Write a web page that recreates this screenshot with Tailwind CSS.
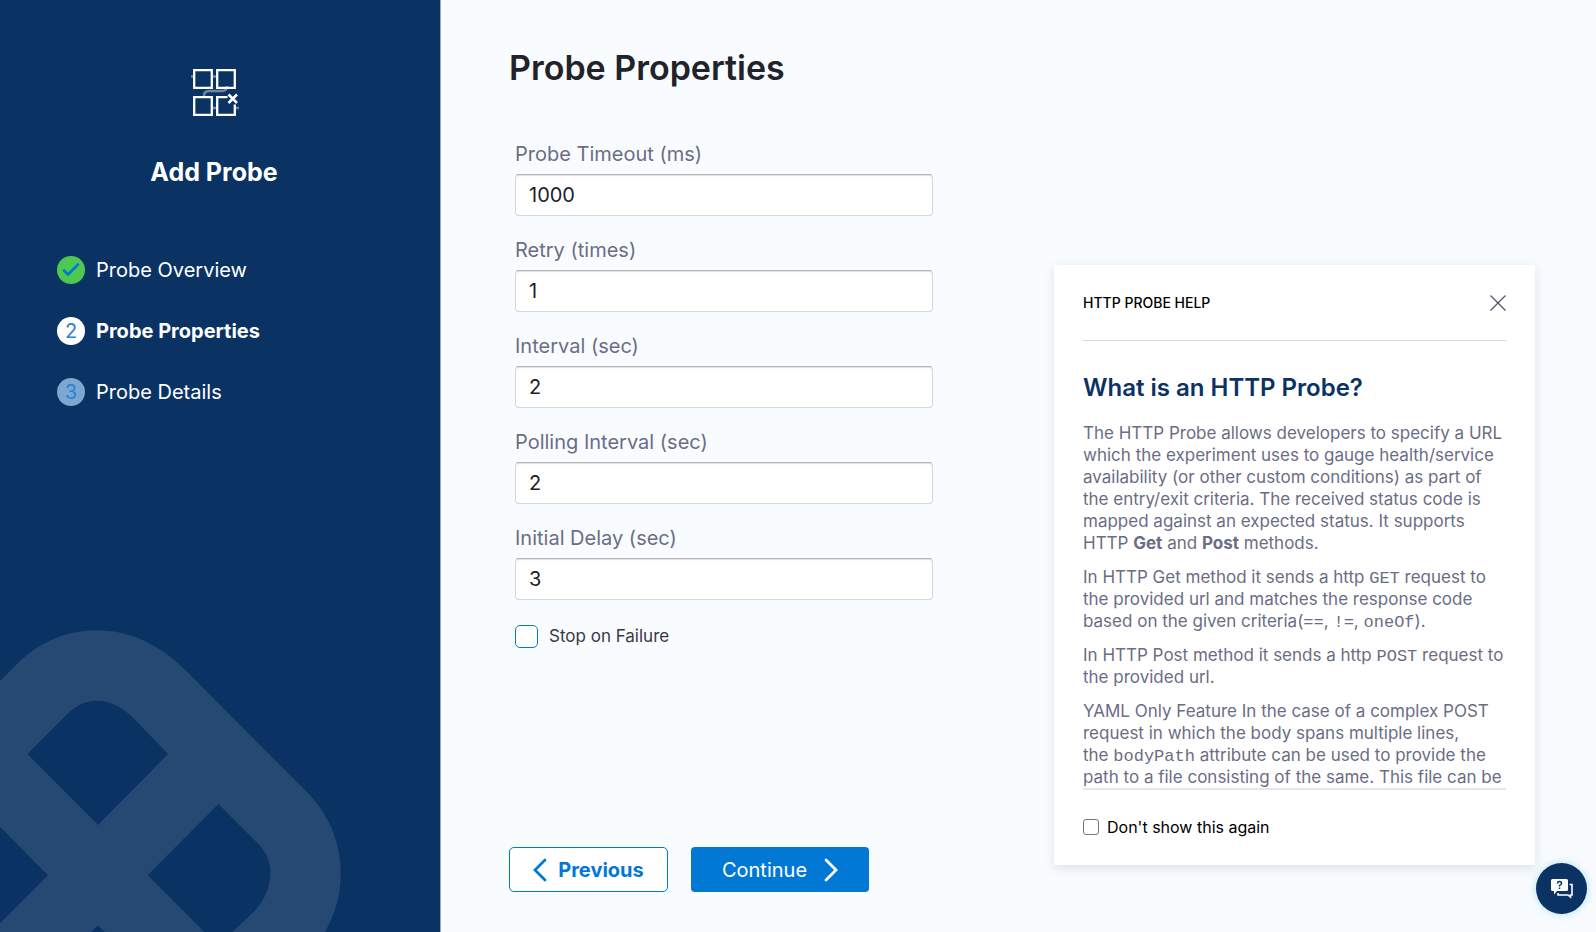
<!DOCTYPE html>
<html lang="en">
<head>
<meta charset="utf-8">
<meta name="viewport" content="width=device-width, initial-scale=1">
<title>Add Probe</title>
<script src="https://cdn.jsdelivr.net/npm/@tailwindcss/browser@4"></script>
</head>
<body class="flex min-h-screen bg-[#f9fcff] font-[Inter,sans-serif] text-[#22222a]">
  <aside class="relative w-[441px] shrink-0 border-r border-[#a9a9a4] bg-[#0a3364] text-white">
    <svg class="absolute bottom-0 left-0 w-[345px]" viewBox="0 0 1035 966" fill="#264973" aria-hidden="true">
      <path fill-rule="evenodd" d="M0 213L45 168C110 103 190 61 290 61C395 61 483 109 550 175L915 540C982 607 1022 690 1022 790C1022 855 1008 905 975 966H697L765 902C795 868 811 830 811 790C811 745 795 722 770 697L655 582L443 796L613 966H314L294 946L274 966H0V940L144 796L0 650ZM82 432L190 324C220 291 250 272 290 272C335 272 370 294 404 328L504 432L294 645Z"/>
    </svg>
    <div class="relative flex w-[428px] flex-col items-center pt-[66px]">
      <svg class="h-[52px] w-[52px]" viewBox="0 0 52 52" fill="none" aria-hidden="true">
        <path d="M3 10.500h3M25 10.500h4M25 42h4M48 42h3M16 31v-1c0-3 2-5 5-5h13c3 0 5-2 5-5" stroke="#6f87a6" stroke-width="2.400"/>
        <path d="M6.200 4.200h17.600v17.600H6.200zM29.200 4.200h17.600v17.600H29.200zM6.200 31.200h17.600v17.600H6.200zM39.500 31.200H29.200v17.600h17.600V38.500" stroke="#fff" stroke-width="2.300"/>
        <path d="M40.500 28.500l8.500 8.500M49 28.500l-8.500 8.500" stroke="#fff" stroke-width="2.600"/>
      </svg>
      <h2 class="mt-9 text-[25px] leading-9 font-bold">Add Probe</h2>
    </div>
    <ol class="relative mt-[66px] flex flex-col gap-[33px] pl-[57px] text-[20px] leading-7">
      <li class="flex items-center gap-[11px]">
        <span class="flex size-7 items-center justify-center rounded-full bg-[#4dc952]">
          <svg class="size-7" viewBox="0 0 28 28" fill="none" stroke="#0278d5" stroke-width="2.600" stroke-linecap="round" stroke-linejoin="round" aria-hidden="true"><path d="M7 14.500l4 4L21 8.500"/></svg>
        </span>Probe Overview</li>
      <li class="flex items-center gap-[11px] font-bold"><span class="flex size-7 items-center justify-center rounded-full bg-white font-normal text-[#2a82d2]">2</span>Probe Properties</li>
      <li class="flex items-center gap-[11px]"><span class="flex size-7 items-center justify-center rounded-full bg-[#7ba7d0] text-[#2a82d2]">3</span>Probe Details</li>
    </ol>
  </aside>

  <main class="flex grow justify-between">
    <form class="ml-[68px] flex w-[424px] flex-col pt-[46px] pb-10">
      <h1 class="text-[34px] leading-11 font-semibold whitespace-nowrap">Probe Properties</h1>
      <div class="mt-[50px] ml-[6px] flex flex-col gap-5 text-[20px] text-[#6b6d85]">
        <div class="flex flex-col gap-[6px]"><label for="timeout" class="leading-7">Probe Timeout (ms)</label>
          <input id="timeout" value="1000" class="h-[42px] rounded border border-[#d6d7dc] border-t-[#b3b4b9] bg-white px-[13px] text-[#1b222b] inset-shadow-[0_1px_1px_rgba(0,0,0,0.12)]"></div>
        <div class="flex flex-col gap-[6px]"><label for="retry" class="leading-7">Retry (times)</label>
          <input id="retry" value="1" class="h-[42px] rounded border border-[#d6d7dc] border-t-[#b3b4b9] bg-white px-[13px] text-[#1b222b] inset-shadow-[0_1px_1px_rgba(0,0,0,0.12)]"></div>
        <div class="flex flex-col gap-[6px]"><label for="interval" class="leading-7">Interval (sec)</label>
          <input id="interval" value="2" class="h-[42px] rounded border border-[#d6d7dc] border-t-[#b3b4b9] bg-white px-[13px] text-[#1b222b] inset-shadow-[0_1px_1px_rgba(0,0,0,0.12)]"></div>
        <div class="flex flex-col gap-[6px]"><label for="polling" class="leading-7">Polling Interval (sec)</label>
          <input id="polling" value="2" class="h-[42px] rounded border border-[#d6d7dc] border-t-[#b3b4b9] bg-white px-[13px] text-[#1b222b] inset-shadow-[0_1px_1px_rgba(0,0,0,0.12)]"></div>
        <div class="flex flex-col gap-[6px]"><label for="delay" class="leading-7">Initial Delay (sec)</label>
          <input id="delay" value="3" class="h-[42px] rounded border border-[#d6d7dc] border-t-[#b3b4b9] bg-white px-[13px] text-[#1b222b] inset-shadow-[0_1px_1px_rgba(0,0,0,0.12)]"></div>
      </div>
      <label class="mt-6 ml-[6px] flex items-center gap-[11px] text-[17px] leading-6 text-[#383946]">
        <input type="checkbox" class="size-[23px] appearance-none rounded-[5px] border border-[#0278d5] bg-white">Stop on Failure</label>
      <div class="mt-auto flex gap-[23px] text-[20px]">
        <button type="button" class="flex h-[45px] w-[159px] items-center justify-center gap-[11px] rounded-[5px] border border-[#0278d5] bg-white font-bold text-[#0278d5]">
          <svg class="h-6 w-[14px]" viewBox="0 0 14 24" fill="none" stroke="currentColor" stroke-width="2.800" stroke-linecap="round" aria-hidden="true"><path d="M12 2L2 12l10 10"/></svg>Previous</button>
        <button type="button" class="flex h-[45px] w-[178px] items-center justify-center gap-[17px] rounded bg-[#0278d5] text-white">Continue
          <svg class="h-6 w-[14px]" viewBox="0 0 14 24" fill="none" stroke="currentColor" stroke-width="2.800" stroke-linecap="round" aria-hidden="true"><path d="M2 2l10 10L2 22"/></svg></button>
      </div>
    </form>

    <section class="mr-[61px] mb-[67px] flex h-[600px] w-[481px] flex-col self-end bg-white px-[29px] shadow-[0_3px_10px_rgba(40,41,61,0.14)]">
      <header class="flex h-[76px] items-center justify-between border-b border-[#d9dae6] text-[14px] font-medium text-black">
        <span>HTTP PROBE HELP</span>
        <button type="button" aria-label="Close"><svg class="size-4" viewBox="0 0 16 16" fill="none" stroke="#4f5162" stroke-width="1.200" aria-hidden="true"><path d="M.5.5l15 15M15.500.5l-15 15"/></svg></button>
      </header>
      <div class="h-[447px] overflow-hidden pt-[31px] text-[17px] leading-[22px] text-[#6b6d85]">
        <h3 class="mb-[18px] text-[24px] leading-8 font-semibold text-[#0a3364]">What is an HTTP Probe?</h3>
        <div class="flex flex-col gap-3 whitespace-nowrap">
          <p>The HTTP Probe allows developers to specify a URL<br>which the experiment uses to gauge health/service<br>availability (or other custom conditions) as part of<br>the entry/exit criteria. The received status code is<br>mapped against an expected status. It supports<br>HTTP <b class="font-bold">Get</b> and <b class="font-bold">Post</b> methods.</p>
          <p>In HTTP Get method it sends a http <code class="font-['Liberation_Mono',monospace] text-[17px] leading-none">GET</code> request to<br>the provided url and matches the response code<br>based on the given criteria(<code class="font-['Liberation_Mono',monospace] text-[17px] leading-none">==</code>, <code class="font-['Liberation_Mono',monospace] text-[17px] leading-none">!=</code>, <code class="font-['Liberation_Mono',monospace] text-[17px] leading-none">oneOf</code>).</p>
          <p>In HTTP Post method it sends a http <code class="font-['Liberation_Mono',monospace] text-[17px] leading-none">POST</code> request to<br>the provided url.</p>
          <p>YAML Only Feature In the case of a complex POST<br>request in which the body spans multiple lines,<br>the <code class="font-['Liberation_Mono',monospace] text-[17px] leading-none">bodyPath</code> attribute can be used to provide the<br>path to a file consisting of the same. This file can be</p>
        </div>
      </div>
      <footer class="flex grow items-center border-t-2 border-[#e4e5ed] pb-[2px] text-[16px] text-black">
        <label class="flex items-center gap-2"><input type="checkbox" class="size-4 appearance-none rounded-[3px] border border-[#767676] bg-white">Don't show this again</label>
      </footer>
    </section>
  </main>

  <button type="button" aria-label="Help chat" class="fixed right-[9px] bottom-[18px] flex size-[51px] items-center justify-center rounded-full bg-[#0a3364] shadow-[0_0_8px_rgba(100,200,235,0.5)]">
    <svg class="h-5 w-[22px]" viewBox="0 0 22 20" aria-hidden="true">
      <path d="M1.500 0h14Q17 0 17 1.500v9Q17 12 15.500 12H6l-3 3.500V12H1.500Q0 12 0 10.500v-9Q0 0 1.500 0Z" fill="#fff"/>
      <path d="M18.500 5.500H21v10.500h-1.500v2L17 16H7v-2" fill="none" stroke="#fff" stroke-width="1.600"/>
      <path d="M6.500 4.500Q6.500 2.500 8.500 2.500T10.500 4.500Q10.500 5.800 8.500 6.400V7.500M8.500 8.600v1.500" fill="none" stroke="#0a3364" stroke-width="1.500"/>
    </svg>
  </button>
</body>
</html>
